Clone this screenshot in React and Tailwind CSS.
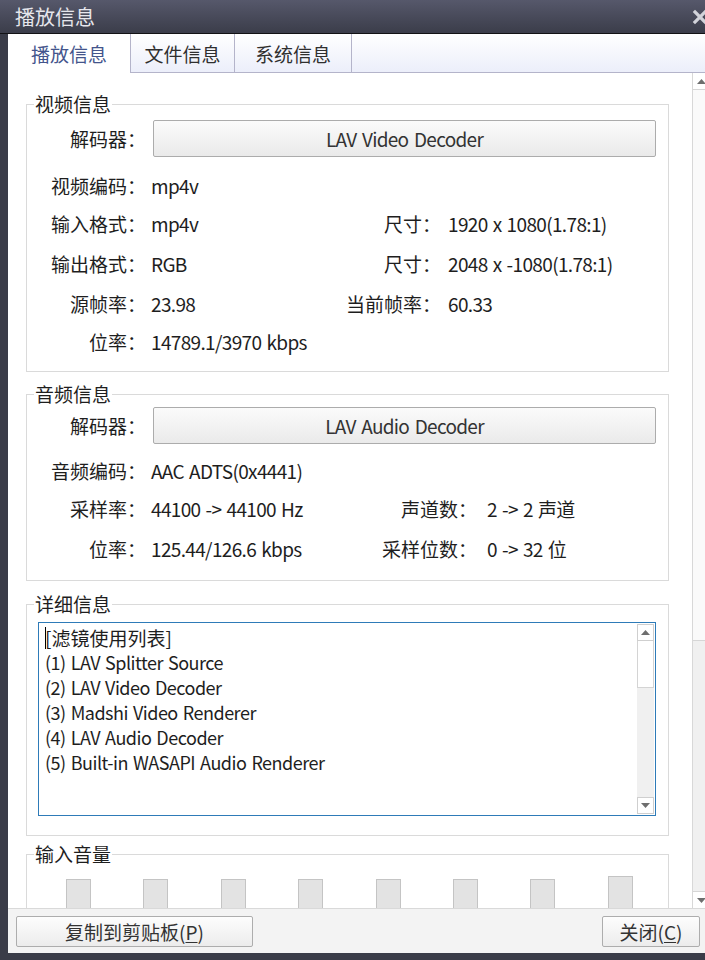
const videoRows = [
  { h: 'h-[37px]', label: '视频编码：', value: 'mp4v' },
  { h: 'h-[39px]', label: '输入格式：', value: 'mp4v', rLabel: '尺寸：', rValue: '1920 x 1080(1.78:1)' },
  { h: 'h-[40px]', label: '输出格式：', value: 'RGB', rLabel: '尺寸：', rValue: '2048 x -1080(1.78:1)' },
  { h: 'h-[40px]', label: '源帧率：', value: '23.98', rLabel: '当前帧率：', rValue: '60.33' },
  { h: 'h-[37px]', label: '位率：', value: '14789.1/3970 kbps' },
]

const audioRows = [
  { h: 'h-[38px]', label: '音频编码：', value: 'AAC ADTS(0x4441)' },
  { h: 'h-[39px]', label: '采样率：', value: '44100 -> 44100 Hz', rLabel: '声道数：', rValue: '2 -> 2 声道' },
  { h: 'h-[41px]', label: '位率：', value: '125.44/126.6 kbps', rLabel: '采样位数：', rValue: '0 -> 32 位' },
]

const filters = [
  '(1) LAV Splitter Source',
  '(2) LAV Video Decoder',
  '(3) Madshi Video Renderer',
  '(4) LAV Audio Decoder',
  '(5) Built-in WASAPI Audio Renderer',
]

const bars = [0, 1, 2, 3, 4, 5, 6, 7]

function Arrow({ down }) {
  return (
    <svg width="9" height="5" viewBox="0 0 9 5" className={down ? 'rotate-180' : ''}>
      <path d="M4.5 0 L9 5 L0 5 Z" fill="#6e6e6e" />
    </svg>
  )
}

function Group({ title, className, children }) {
  return (
    <fieldset className={`border border-[#dadada] ml-[18px] w-[643px] ${className}`}>
      <legend className="ml-[7px] px-px leading-[20px] text-[19px] text-[#1e1e1e]">{title}</legend>
      {children}
    </fieldset>
  )
}

function DecoderRow({ name, className }) {
  return (
    <div className={`flex items-center ${className}`}>
      <span className="w-[119px] shrink-0 text-right">解码器：</span>
      <button className="ml-[7px] mr-[12px] flex-1 h-[37px] border border-[#acacac] rounded-[2px] bg-gradient-to-b from-[#fbfbfb] to-[#eaeaea] text-[#333] text-[19px] tracking-[-0.7px] [word-spacing:2px] leading-none">
        {name}
      </button>
    </div>
  )
}

function InfoRow({ row, valueW, rGap }) {
  return (
    <div className={`flex items-center ${row.h}`}>
      <span className="w-[119px] shrink-0 text-right">{row.label}</span>
      <span className={`ml-[5px] shrink-0 tracking-[-0.65px] [word-spacing:1.5px] ${valueW}`}>{row.value}</span>
      {row.rLabel && (
        <>
          <span className="w-[100px] shrink-0 text-right">{row.rLabel}</span>
          <span className={`tracking-[-0.65px] [word-spacing:1.5px] ${rGap}`}>{row.rValue}</span>
        </>
      )}
    </div>
  )
}

function Btn({ children, className }) {
  return (
    <button className={`h-[31px] border border-[#adadad] rounded-[2px] bg-gradient-to-b from-[#fdfdfd] to-[#ececec] text-[19px] text-[#333] leading-none ${className}`}>
      {children}
    </button>
  )
}

export default function App() {
  return (
    <div className="w-[705px] h-[960px] overflow-hidden bg-[#3a3c48] font-['Noto_Sans_CJK_SC',sans-serif]">
      <div className="w-[717px] h-[960px] flex flex-col">
        {/* Title bar */}
        <div className="h-[34px] shrink-0 flex items-center border-b border-[#121215] bg-gradient-to-b from-[#56586b] to-[#3b3d4a]">
          <span className="ml-[15px] text-[20px] leading-none text-[#e6e6ec]">播放信息</span>
          <svg width="16" height="16" viewBox="0 0 16 16" className="ml-auto mr-[9px]">
            <path d="M3 3 L13 13 M13 3 L3 13" stroke="#d2d3da" strokeWidth="3.2" strokeLinecap="square" />
          </svg>
        </div>

        <div className="flex-1 flex flex-col mx-[8px] mb-[7px] bg-white">
          {/* Tabs */}
          <div className="h-[39px] shrink-0 flex bg-gradient-to-b from-white to-[#ebeefa] text-[19px] leading-none">
            <div className="w-[123px] bg-white border-r border-[#b4b4ca] flex items-center justify-center text-[#44558c]">
              播放信息
            </div>
            <div className="w-[104px] border-r border-b border-[#b4b4ca] flex items-center justify-center text-[#2f2f2f]">
              文件信息
            </div>
            <div className="w-[117px] border-r border-b border-[#b4b4ca] flex items-center justify-center text-[#2f2f2f]">
              系统信息
            </div>
            <div className="flex-1 border-b border-[#b4b4ca]" />
          </div>

          {/* Body + scrollbar */}
          <div className="h-[835px] shrink-0 flex">
            <div className="w-[685px] overflow-hidden text-[19px] text-[#1e1e1e] leading-none">
              <Group title="视频信息" className="mt-[21px] pb-[11px]">
                <DecoderRow name="LAV Video Decoder" className="mt-[6px]" />
                <div className="mt-[10px]">
                  {videoRows.map((r) => (
                    <InfoRow key={r.label + r.value} row={r} valueW="w-[190px]" rGap="ml-[7px]" />
                  ))}
                </div>
              </Group>

              <Group title="音频信息" className="mt-[12px] pb-[11px]">
                <DecoderRow name="LAV Audio Decoder" className="mt-[3px]" />
                <div className="mt-[7px]">
                  {audioRows.map((r) => (
                    <InfoRow key={r.label + r.value} row={r} valueW="w-[226px]" rGap="ml-[10px]" />
                  ))}
                </div>
              </Group>

              <Group title="详细信息" className="mt-[13px] pb-[19px]">
                <div className="mt-[8px] ml-[11px] w-[618px] h-[194px] border border-[#2e7bb8] flex">
                  <div className="flex-1 pl-[6px] pt-[2px] leading-[25px]">
                    <div className="flex items-center">
                      <span className="inline-block w-px h-[22px] bg-black -mr-px" />
                      <span>[滤镜使用列表]</span>
                    </div>
                    {filters.map((f) => (
                      <div key={f} className="text-[18px] tracking-[-0.5px] [word-spacing:1.5px]">{f}</div>
                    ))}
                  </div>
                  <div className="w-[17px] my-px mr-px bg-[#f0f0f0] flex flex-col">
                    <div className="h-[17px] border border-[#cfcfcf] bg-white flex items-center justify-center">
                      <Arrow />
                    </div>
                    <div className="h-[47px] border border-[#d4d4d4] border-t-0 bg-white" />
                    <div className="flex-1" />
                    <div className="h-[17px] border border-[#cfcfcf] bg-white flex items-center justify-center">
                      <Arrow down />
                    </div>
                  </div>
                </div>
              </Group>

              <Group title="输入音量" className="mt-[8px] pb-[20px]">
                <div className="mt-[12px] ml-[39px] flex items-end gap-[52.4px]">
                  {bars.map((b) => (
                    <div
                      key={b}
                      className={`w-[25px] border border-[#c4c4c4] bg-[#e3e3e3] ${b === 7 ? 'h-[46px]' : 'h-[43px]'}`}
                    />
                  ))}
                </div>
              </Group>
            </div>

            {/* Window scrollbar */}
            <div className="w-[17px] border-l border-[#d8d8d8] bg-[#f0f0f0] flex flex-col">
              <div className="h-[17px] border-b border-[#d6d6d6] bg-white flex items-center justify-center">
                <Arrow />
              </div>
              <div className="h-[551px] border-b border-[#d6d6d6] bg-[#fafafa]" />
              <div className="flex-1" />
              <div className="h-[17px] border-t border-[#d6d6d6] bg-white flex items-center justify-center">
                <Arrow down />
              </div>
            </div>
          </div>

          {/* Footer */}
          <div className="flex-1 flex items-start justify-between pt-[7px] pl-[8px] pr-[9px] bg-[#f3f3f3] border-t border-[#d9d9d9]">
            <Btn className="w-[237px]">
              复制到剪贴板(<span className="underline underline-offset-2">P</span>)
            </Btn>
            <Btn className="w-[98px]">
              关闭(<span className="underline underline-offset-2">C</span>)
            </Btn>
          </div>
        </div>
      </div>
    </div>
  )
}
